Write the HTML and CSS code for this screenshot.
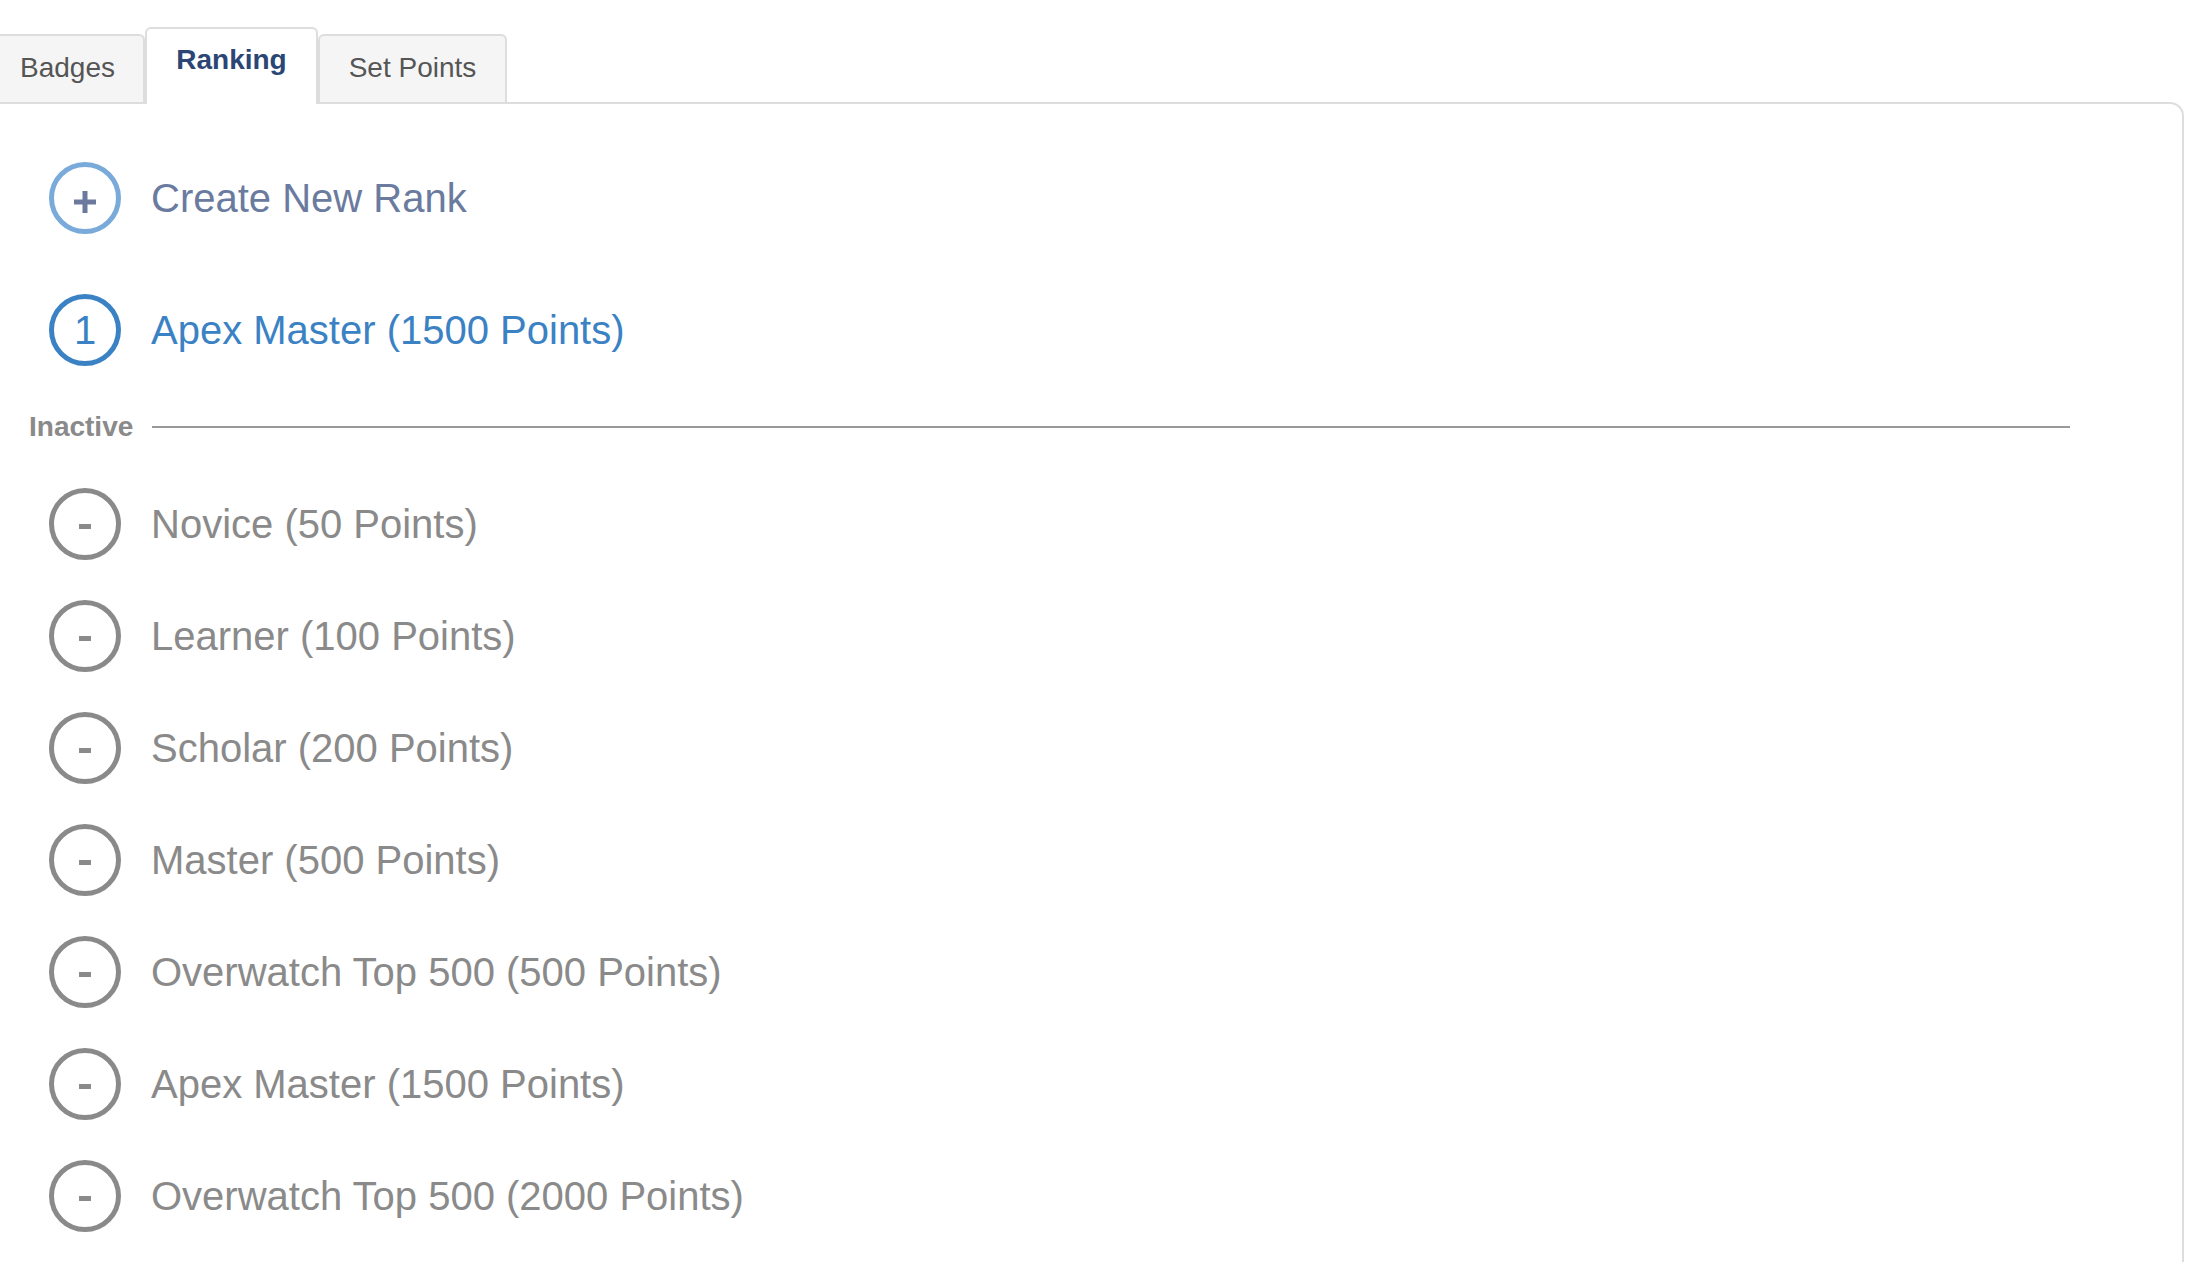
FILE: index.html
```html
<!DOCTYPE html>
<html lang="en">
  <head>
    <meta charset="UTF-8" />
    <title>Ranking</title>
    <link rel="stylesheet" href="styles.css">
  </head>
  <body>
    <div class="tabs">
      <div class="tab tab-badges">Badges</div>
      <div class="tab tab-ranking active">Ranking</div>
      <div class="tab tab-points">Set Points</div>
    </div>

    <div class="panel">
      <div class="rank create">
        <span class="badge">
          <svg width="22" height="22" viewBox="0 0 22 22">
            <rect x="0" y="8.5" width="22" height="5" fill="#6b7a9c" />
            <rect x="8.5" y="0" width="5" height="22" fill="#6b7a9c" />
          </svg>
        </span>
        <span class="label">Create New Rank</span>
      </div>

      <div class="rank current">
        <span class="badge">1</span>
        <span class="label">Apex Master (1500 Points)</span>
      </div>

      <div class="divider">
        <span>Inactive</span>
        <div class="rule"></div>
      </div>

      <div class="inactive-list">
        <div class="rank inactive">
          <span class="badge"><i class="dash"></i></span>
          <span class="label">Novice (50 Points)</span>
        </div>
        <div class="rank inactive">
          <span class="badge"><i class="dash"></i></span>
          <span class="label">Learner (100 Points)</span>
        </div>
        <div class="rank inactive">
          <span class="badge"><i class="dash"></i></span>
          <span class="label">Scholar (200 Points)</span>
        </div>
        <div class="rank inactive">
          <span class="badge"><i class="dash"></i></span>
          <span class="label">Master (500 Points)</span>
        </div>
        <div class="rank inactive">
          <span class="badge"><i class="dash"></i></span>
          <span class="label">Overwatch Top 500 (500 Points)</span>
        </div>
        <div class="rank inactive">
          <span class="badge"><i class="dash"></i></span>
          <span class="label">Apex Master (1500 Points)</span>
        </div>
        <div class="rank inactive">
          <span class="badge"><i class="dash"></i></span>
          <span class="label">Overwatch Top 500 (2000 Points)</span>
        </div>
      </div>
    </div>
  </body>
</html>
```

FILE: styles.css
```css
body {
  margin: 0;
  font-family: "Liberation Sans", Arial, sans-serif;
  background-color: #fff;
  overflow: hidden;
}

/* tab strip */
.tabs {
  display: flex;
  align-items: flex-end;
  height: 102px;
  margin-left: -10px;
}

.tab {
  box-sizing: border-box;
  height: 68px;
  padding-top: 16px;
  font-size: 28px;
  line-height: 32px;
  text-align: center;
  color: #555;
  background-color: #f5f5f5;
  border: 2px solid #dddddd;
  border-bottom: none;
  border-radius: 6px 6px 0 0;
}

.tab-badges {
  width: 155px;
}

.tab-ranking {
  width: 173px;
}

.tab-points {
  width: 189px;
}

.tab.active {
  position: relative;
  z-index: 1;
  height: 77px;
  margin-bottom: -2px;
  padding-top: 15px;
  font-weight: bold;
  color: #2b4675;
  background-color: #fff;
}

/* panel */
.panel {
  height: 1300px;
  margin: 0 20px 0 -2px;
  padding: 58px 0 0 29px;
  border: 2px solid #dddddd;
  border-radius: 0 14px 0 0;
}

.rank {
  display: flex;
  align-items: center;
  height: 72px;
  padding-left: 20px;
  font-size: 40px;
}

.badge {
  box-sizing: border-box;
  display: flex;
  align-items: center;
  justify-content: center;
  width: 72px;
  height: 72px;
  margin-right: 30px;
  border: 5px solid #8a8a8a;
  border-radius: 50%;
}

.create {
  color: #6a7b9f;
  margin-bottom: 60px;
}

.create .badge {
  border-color: #7aaad9;
  padding-top: 7px;
}

.current {
  color: #3b82c4;
}

.current .badge {
  border-color: #3b82c4;
  font-size: 40px;
}

.inactive {
  color: #8a8a8a;
}

.dash {
  display: block;
  width: 12px;
  height: 5px;
  margin-top: 4px;
  background-color: #8a8a8a;
}

.divider {
  display: flex;
  align-items: center;
  height: 30px;
  margin: 46px 0;
  font-size: 28px;
  font-weight: bold;
  color: #8a8a8a;
}

.rule {
  flex: 1;
  height: 2px;
  margin: 0 112px 0 19px;
  background-color: #999;
}

.inactive-list {
  display: flex;
  flex-direction: column;
  gap: 40px;
}
```
